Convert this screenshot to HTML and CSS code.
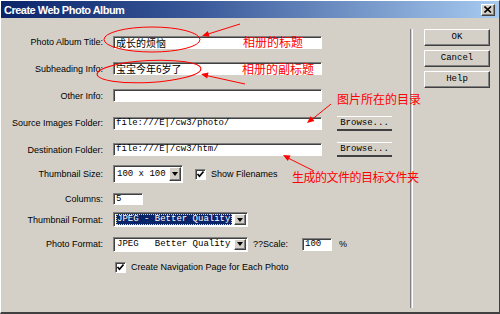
FILE: index.html
```html
<!DOCTYPE html>
<html lang="en">
<head>
    <meta charset="UTF-8">
    <meta name="viewport" content="width=device-width, initial-scale=1.0">
    <title>Create Web Photo Album</title>
    <link rel="stylesheet" href="styles.css">
</head>
<body>
    <div class="window">
        <div class="titlebar">
            <span class="title">Create Web Photo Album</span>
            <span class="close">
                <svg width="8" height="7" viewBox="0 0 8 7"><path d="M0.5 0.5 L7 6.5 M7 0.5 L0.5 6.5" stroke="#000" stroke-width="1.6"/></svg>
            </span>
        </div>

        <div class="content">
            <div class="form">
                <label>Photo Album Title:</label>
                <div class="field"><div class="input wide cjk">成长的烦恼</div></div>

                <label>Subheading Info:</label>
                <div class="field"><div class="input wide cjk">宝宝今年6岁了</div></div>

                <label>Other Info:</label>
                <div class="field"><div class="input wide"></div></div>

                <label>Source Images Folder:</label>
                <div class="field">
                    <div class="input wide mono">file:///E|/cw3/photo/</div>
                    <div class="browse">Browse...</div>
                </div>

                <label>Destination Folder:</label>
                <div class="field">
                    <div class="input wide mono">file:///E|/cw3/htm/</div>
                    <div class="browse">Browse...</div>
                </div>

                <label>Thumbnail Size:</label>
                <div class="field">
                    <div class="select size">
                        <span class="value">100 x 100</span>
                        <span class="arrow"></span>
                    </div>
                    <span class="check show-names"></span>
                    <span class="check-label">Show Filenames</span>
                </div>

                <label>Columns:</label>
                <div class="field"><div class="input cols mono">5</div></div>

                <label>Thumbnail Format:</label>
                <div class="field">
                    <div class="select format">
                        <span class="value selected">JPEG - Better Quality</span>
                        <span class="arrow"></span>
                    </div>
                </div>

                <label>Photo Format:</label>
                <div class="field">
                    <div class="select format">
                        <span class="value">JPEG   Better Quality</span>
                        <span class="arrow"></span>
                    </div>
                    <span class="scale-label">??Scale:</span>
                    <div class="input scale mono">100</div>
                    <span class="percent">%</span>
                </div>

                <div class="field nav-row">
                    <span class="check"></span>
                    <span class="check-label">Create Navigation Page for Each Photo</span>
                </div>
            </div>

            <div class="sep"></div>

            <div class="buttons">
                <div class="btn">OK</div>
                <div class="btn">Cancel</div>
                <div class="btn">Help</div>
            </div>
        </div>

        <!-- red hand-drawn notes on top of the dialog -->
        <svg class="marks" width="500" height="314" viewBox="0 0 500 314">
            <g fill="none" stroke="#f00" stroke-width="1">
                <ellipse cx="152" cy="39.5" rx="48" ry="12.5"/>
                <ellipse cx="149" cy="71.5" rx="52" ry="11" transform="rotate(-3 149 71.5)"/>
                <line x1="240" y1="24" x2="205" y2="35"/>
                <line x1="245" y1="84" x2="204" y2="75"/>
                <line x1="331" y1="104" x2="310" y2="121"/>
                <line x1="314" y1="171" x2="286" y2="157"/>
            </g>
            <g fill="#f00">
                <polygon points="202,36 207.8,31 209.6,36.8"/>
                <polygon points="201,74 208.5,72.6 207.2,78.5"/>
                <polygon points="307,123 310.6,116.3 314.4,121"/>
                <polygon points="283,155 290.6,155.5 287.8,160.9"/>
            </g>
        </svg>
        <span class="note n1">相册的标题</span>
        <span class="note n2">相册的副标题</span>
        <span class="note n3">图片所在的目录</span>
        <span class="note n4">生成的文件的目标文件夹</span>
    </div>
</body>
</html>
```

FILE: styles.css
```css
body {
    margin: 0;
    background-color: #d4d0c8;
    font-family: "Liberation Sans", Arial, sans-serif;
    font-size: 9px;
    color: #000;
}
.window {
    position: relative;
    width: 500px;
    height: 314px;
    box-sizing: border-box;
    background-color: #d4d0c8;
    border-top: 1px solid #fff;
    border-left: 1px solid #fff;
    border-right: 1px solid #404040;
    border-bottom: 2px solid #404040;
    overflow: hidden;
}
.titlebar {
    height: 17px;
    display: flex;
    align-items: center;
    justify-content: space-between;
    padding: 0 4px 0 3px;
    background: linear-gradient(to right, #0a246a 0%, #3a5a9a 40%, #a6caf0 100%);
}
.title {
    color: #fff;
    font-weight: bold;
    font-size: 11px;
    letter-spacing: -0.5px;
}
.close {
    width: 14px;
    height: 12px;
    box-sizing: border-box;
    display: flex;
    align-items: center;
    justify-content: center;
    background-color: #d4d0c8;
    border: 1px solid;
    border-color: #fff #404040 #404040 #fff;
    box-shadow: inset -1px -1px #808080;
}
.content {
    display: flex;
    align-items: flex-start;
    padding-top: 11px;
}
.form {
    width: 409px;
    display: grid;
    grid-template-columns: 102px 1fr;
    grid-template-rows: 26px 27px 27px 28px 25px 24px 26px 15px 34px 12px;
    column-gap: 10px;
    align-items: center;
}
.form label {
    text-align: right;
    white-space: nowrap;
}
.field {
    display: flex;
    align-items: center;
}
.nav-row {
    grid-column: 2;
    padding-left: 2px;
}
.input {
    height: 13px;
    box-sizing: border-box;
    background-color: #fff;
    border: 1px solid;
    border-color: #808080 #fff #fff #808080;
    box-shadow: inset 1px 1px #404040;
    padding: 0 2px;
    line-height: 11px;
    white-space: pre;
    overflow: visible;
}
.wide {
    width: 209px;
}
.cols {
    width: 30px;
    height: 12px;
}
.scale {
    width: 30px;
    margin-left: 14px;
}
.mono {
    font-family: "Liberation Mono", "Courier New", monospace;
    font-size: 9px;
}
.cjk {
    font-family: "Noto Sans CJK SC", sans-serif;
    font-size: 10px;
    line-height: 11px;
}
.browse {
    width: 55px;
    height: 15px;
    margin-left: 15px;
    box-sizing: border-box;
    border-top: 1px solid #fff;
    border-bottom: 2px solid #404040;
    font-family: "Liberation Mono", "Courier New", monospace;
    font-size: 9px;
    line-height: 12px;
    text-align: center;
}
.select {
    box-sizing: border-box;
    display: flex;
    align-items: center;
    justify-content: space-between;
    background-color: #fff;
    border: 1px solid;
    border-color: #808080 #fff #fff #808080;
    box-shadow: inset 1px 1px #404040;
    padding: 1px 1px 1px 2px;
    font-family: "Liberation Mono", "Courier New", monospace;
    font-size: 9px;
    white-space: pre;
}
.select.size {
    width: 70px;
    height: 18px;
}
.select.format {
    width: 135px;
    height: 15px;
}
.value {
    line-height: 11px;
    padding-left: 1px;
}
.value.selected {
    flex: 1;
    margin-right: 2px;
    background-color: #0a246a;
    color: #fff;
    outline: 1px dotted #e8e0a0;
    outline-offset: -1px;
}
.arrow {
    width: 12px;
    align-self: stretch;
    box-sizing: border-box;
    position: relative;
    background-color: #d4d0c8;
    border: 1px solid;
    border-color: #fff #404040 #404040 #fff;
    box-shadow: inset -1px -1px #808080;
}
.arrow::after {
    content: "";
    position: absolute;
    left: 2px;
    top: 50%;
    margin-top: -2px;
    border-left: 3.5px solid transparent;
    border-right: 3.5px solid transparent;
    border-top: 4px solid #000;
}
.check {
    width: 11px;
    height: 11px;
    box-sizing: border-box;
    background: #fff url("data:image/svg+xml,%3Csvg xmlns='http://www.w3.org/2000/svg' width='9' height='9'%3E%3Cpath d='M1.5 4 L3.5 6.3 L7.5 1.5' fill='none' stroke='%23000' stroke-width='1.7'/%3E%3C/svg%3E") no-repeat 0 0;
    border: 1px solid;
    border-color: #808080 #fff #fff #808080;
    box-shadow: inset 1px 1px #404040;
}
.show-names {
    margin-left: 12px;
}
.check-label {
    margin-left: 5px;
    white-space: nowrap;
}
.scale-label {
    margin-left: 5px;
}
.percent {
    margin-left: 7px;
}
.sep {
    width: 1px;
    height: 279px;
    border-left: 1px solid #808080;
    border-right: 1px solid #fff;
}
.buttons {
    margin-left: 11px;
    width: 66px;
    display: flex;
    flex-direction: column;
    gap: 4px;
}
.btn {
    height: 17px;
    box-sizing: border-box;
    border: 1px solid;
    border-color: #fff #404040 #404040 #fff;
    box-shadow: inset -1px -1px #808080;
    font-family: "Liberation Mono", "Courier New", monospace;
    font-size: 9px;
    line-height: 14px;
    text-align: center;
}
.marks {
    position: absolute;
    left: -1px;
    top: -1px;
    pointer-events: none;
}
.note {
    position: absolute;
    color: #f00;
    font-family: "Noto Sans CJK SC", sans-serif;
    font-size: 12px;
    line-height: 12px;
    white-space: nowrap;
}
.n1 { left: 242px; top: 35px; }
.n2 { left: 241px; top: 62px; }
.n3 { left: 336px; top: 92px; }
.n4 { left: 291px; top: 170px; letter-spacing: -0.5px; }
```
